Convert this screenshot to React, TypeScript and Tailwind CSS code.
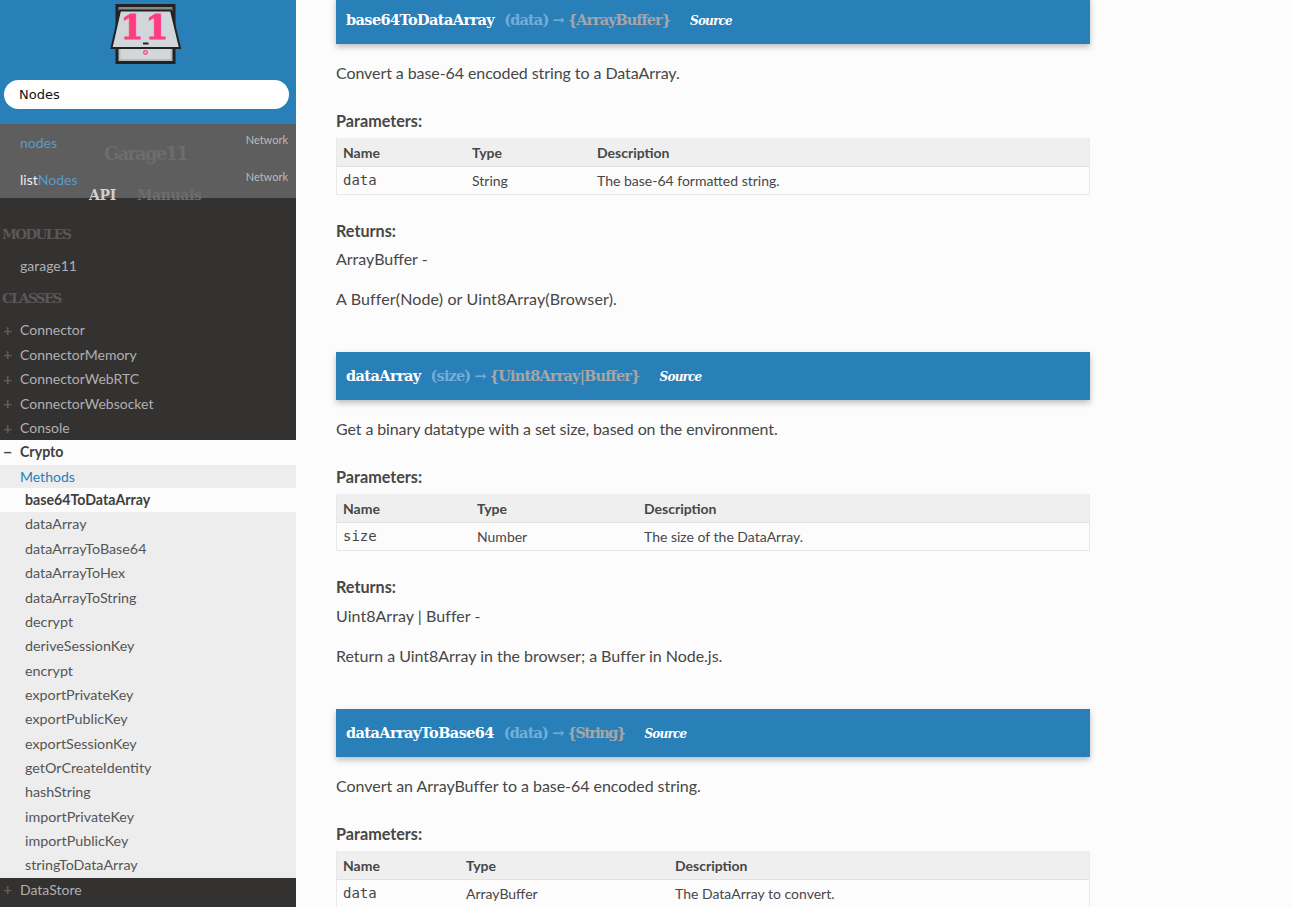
import React from "react";

const slab = "font-['DejaVu_Serif',serif]";

const classesBefore = ["Connector", "ConnectorMemory", "ConnectorWebRTC", "ConnectorWebsocket", "Console"];
const methods = ["dataArray", "dataArrayToBase64", "dataArrayToHex", "dataArrayToString", "decrypt", "deriveSessionKey", "encrypt", "exportPrivateKey", "exportPublicKey", "exportSessionKey", "getOrCreateIdentity", "hashString", "importPrivateKey", "importPublicKey", "stringToDataArray"];

function Logo() {
  return (
    <svg width="72" height="62" viewBox="0 0 72 62" className="block">
      <rect x="5.5" y="1" width="60" height="60" fill="#222" />
      <rect x="8.5" y="4" width="54" height="4" fill="#8a8a8a" />
      <rect x="8.5" y="45" width="54" height="13" fill="#b9bcbe" />
      <rect x="10.5" y="46" width="50" height="10" fill="#d3d7da" />
      <polygon points="10,7.5 61,7.5 70,45 1.5,45" fill="#d0d6da" stroke="#222" strokeWidth="2" />
      <text x="35.5" y="36" textAnchor="middle" fontFamily="'DejaVu Serif',serif" fontWeight="700" fontSize="33" letterSpacing="2" stroke="#ff3c82" strokeWidth="1" fill="#ff3c82">11</text>
      <rect x="33" y="39.5" width="5.5" height="2" fill="#222" />
      <circle cx="35.5" cy="49.5" r="1.8" fill="none" stroke="#ff3c82" strokeWidth="1.3" />
    </svg>
  );
}

function NavRow({ label, marker }: { label: string; marker?: string }) {
  return (
    <div className="h-[24.5px] flex items-center text-[14px] text-[#b0b0b0]">
      <span className="w-[20px] pl-[3px] text-[#5e5d5b] font-bold text-[16px] leading-none">{marker}</span>
      <span>{label}</span>
    </div>
  );
}

function Sidebar() {
  return (
    <aside className="relative w-[296px] shrink-0 h-full overflow-hidden bg-[#343131] font-['Lato',sans-serif]">
      <div className="h-[124px] bg-[#2980b9] pt-[3px]">
        <div className="flex justify-center pr-[5px]"><Logo /></div>
        <div className="mx-[4px] mt-[15px] w-[285px] h-[29px] rounded-full bg-white pl-[15px] flex items-center text-[13px] text-[#111] font-['DejaVu_Sans',sans-serif]">Nodes</div>
      </div>

      <div className="h-[74px] relative bg-[#5e5e5e] text-[14px]">
        <div className="absolute left-[20px] top-[8px] text-[#5b9bc8]">nodes</div>
        <div className="absolute right-[8px] top-[8px] text-[11px] text-[#bbb]">Network</div>
        <div className="absolute left-[20px] top-[45px] text-[#eee]">list<span className="text-[#5b9bc8]">Nodes</span></div>
        <div className="absolute right-[8px] top-[45px] text-[11px] text-[#bbb]">Network</div>
        <div className={`${slab} absolute left-[104px] top-[16px] text-[18px] font-bold text-[#6d6d6d] tracking-[-1.8px]`}>Garage11</div>
        <div className={`${slab} absolute left-[89px] top-[61px] text-[14px] font-bold text-[#cfcfcf] tracking-[-0.3px]`}>API</div>
        <div className={`${slab} absolute left-[137px] top-[61px] text-[14px] font-bold text-[#6c6c6c] tracking-[-0.4px]`}>Manuals</div>
      </div>

      <div className={`${slab} mt-[24px] pl-[2px] h-[24px] flex items-center text-[13.5px] font-bold text-[#5a5858] tracking-[-1.6px]`}>MODULES</div>
      <div className="mt-[7px] h-[24px] flex items-center pl-[20px] text-[14px] text-[#b0b0b0]">garage11</div>
      <div className={`${slab} mt-[9px] pl-[2px] h-[24px] flex items-center text-[13.5px] font-bold text-[#5a5858] tracking-[-1.6px]`}>CLASSES</div>
      <div className="mt-[7.5px]">
        {classesBefore.map((c) => <NavRow key={c} label={c} marker="+" />)}
      </div>
      <div className="bg-[#ededed] pb-[0.6px]">
        <div className="h-[25px] pb-[1px] bg-[#fcfcfc] flex items-center text-[14.2px] font-bold text-[#404040]">
          <span className="w-[20px] pl-[3px] text-[16px] leading-none">−</span><span>Crypto</span>
        </div>
        <div className="h-[23px] pl-[20px] flex items-center text-[14px] text-[#2980b9]">Methods</div>
        <div className="h-[24px] pl-[25px] bg-[#fcfcfc] flex items-center text-[14.2px] font-bold text-[#404040]">base64ToDataArray</div>
        {methods.map((m) => (
          <div key={m} className="h-[24.36px] pl-[25px] flex items-center text-[14.3px] text-[#555]">{m}</div>
        ))}
      </div>
      <div className="-mt-[1px]"><NavRow label="DataStore" marker="+" /></div>
    </aside>
  );
}

function Section({ name, sig, ret, retCls, desc, descCls, cols, row, returns, returnCls, returnDesc, returnDescCls }: {
  name: string; sig: string; ret: string; retCls: string; desc: string; descCls: string; cols: [number, number];
  row: [string, string, string]; returns?: string; returnCls?: string; returnDesc?: string; returnDescCls?: string;
}) {
  return (
    <section className="mb-[41px]">
      <div className="h-[48px] bg-[#2980b9] pl-[10px] flex items-center shadow-[0_3px_6px_rgba(0,0,0,0.25)] whitespace-pre">
        <span className={`${slab} text-[14.5px] font-bold text-white tracking-[-0.6px]`}>{name}</span>
        <span className={`${slab} ml-[10px] text-[14.5px] font-bold text-[#74aed6] tracking-[-0.85px]`}>({sig}) →</span>
        <span className={`${slab} ml-[4px] text-[14.5px] font-bold text-[#a6a6a6] ${retCls}`}>{`{${ret}}`}</span>
        <span className={`${slab} ml-[20px] mt-[2px] text-[12px] italic font-bold text-white tracking-[-0.8px]`}>Source</span>
      </div>
      <p className={`mt-[17px] h-[24px] leading-[24px] text-[16px] ${descCls}`}>{desc}</p>
      <h5 className="mt-[24px] h-[24px] leading-[24px] text-[16.2px] font-bold">Parameters:</h5>
      <div className="mt-[5px] w-[754px] border-x border-b border-[#e8e8e8] text-[14px]">
        <div className="flex h-[29px] items-center bg-[#efefef] border-b border-[#e1e1e1] font-bold text-[14px]">
          <div className="pl-[6px]" style={{ width: cols[0] }}>Name</div>
          <div className="pl-[6px]" style={{ width: cols[1] }}>Type</div>
          <div className="pl-[6px]">Description</div>
        </div>
        <div className="flex h-[27px] items-center">
          <div className="pl-[6px] font-['DejaVu_Sans_Mono',monospace] text-[14px]" style={{ width: cols[0] }}>{row[0]}</div>
          <div className="pl-[6px]" style={{ width: cols[1] }}>{row[1]}</div>
          <div className="pl-[6px]">{row[2]}</div>
        </div>
      </div>
      {returns && (
        <>
          <h5 className="mt-[24px] h-[24px] leading-[24px] text-[16.2px] font-bold">Returns:</h5>
          <p className={`h-[24px] leading-[24px] text-[16px] ${returnCls}`}>{returns}</p>
          <p className={`mt-[16px] h-[24px] leading-[24px] text-[16px] ${returnDescCls}`}>{returnDesc}</p>
        </>
      )}
    </section>
  );
}

export default function App() {
  return (
    <div className="flex h-[907px] w-[1292px] overflow-hidden bg-[#fcfcfc] text-[#474747] font-['Lato',sans-serif]">
      <Sidebar />
      <main className="w-[754px] ml-[40px] -mt-[4px] shrink-0">
        <Section name="base64ToDataArray" sig="data" ret="ArrayBuffer" retCls="tracking-[-1px]" desc="Convert a base-64 encoded string to a DataArray." descCls="tracking-[-0.08px]" cols={[129, 125]} row={["data", "String", "The base-64 formatted string."]} returns="ArrayBuffer -" returnCls="mt-[4px]" returnDesc="A Buffer(Node) or Uint8Array(Browser)." returnDescCls="tracking-[0.13px]" />
        <Section name="dataArray" sig="size" ret="Uint8Array|Buffer" retCls="tracking-[-0.85px]" desc="Get a binary datatype with a set size, based on the environment." descCls="tracking-[-0.11px]" cols={[134, 167]} row={["size", "Number", "The size of the DataArray."]} returns="Uint8Array | Buffer -" returnCls="mt-[5px] tracking-[0.05px]" returnDesc="Return a Uint8Array in the browser; a Buffer in Node.js." returnDescCls="tracking-[-0.03px]" />
        <Section name="dataArrayToBase64" sig="data" ret="String" retCls="tracking-[-1.6px]" desc="Convert an ArrayBuffer to a base-64 encoded string." descCls="tracking-[-0.04px]" cols={[123, 209]} row={["data", "ArrayBuffer", "The DataArray to convert."]} />
      </main>
    </div>
  );
}
